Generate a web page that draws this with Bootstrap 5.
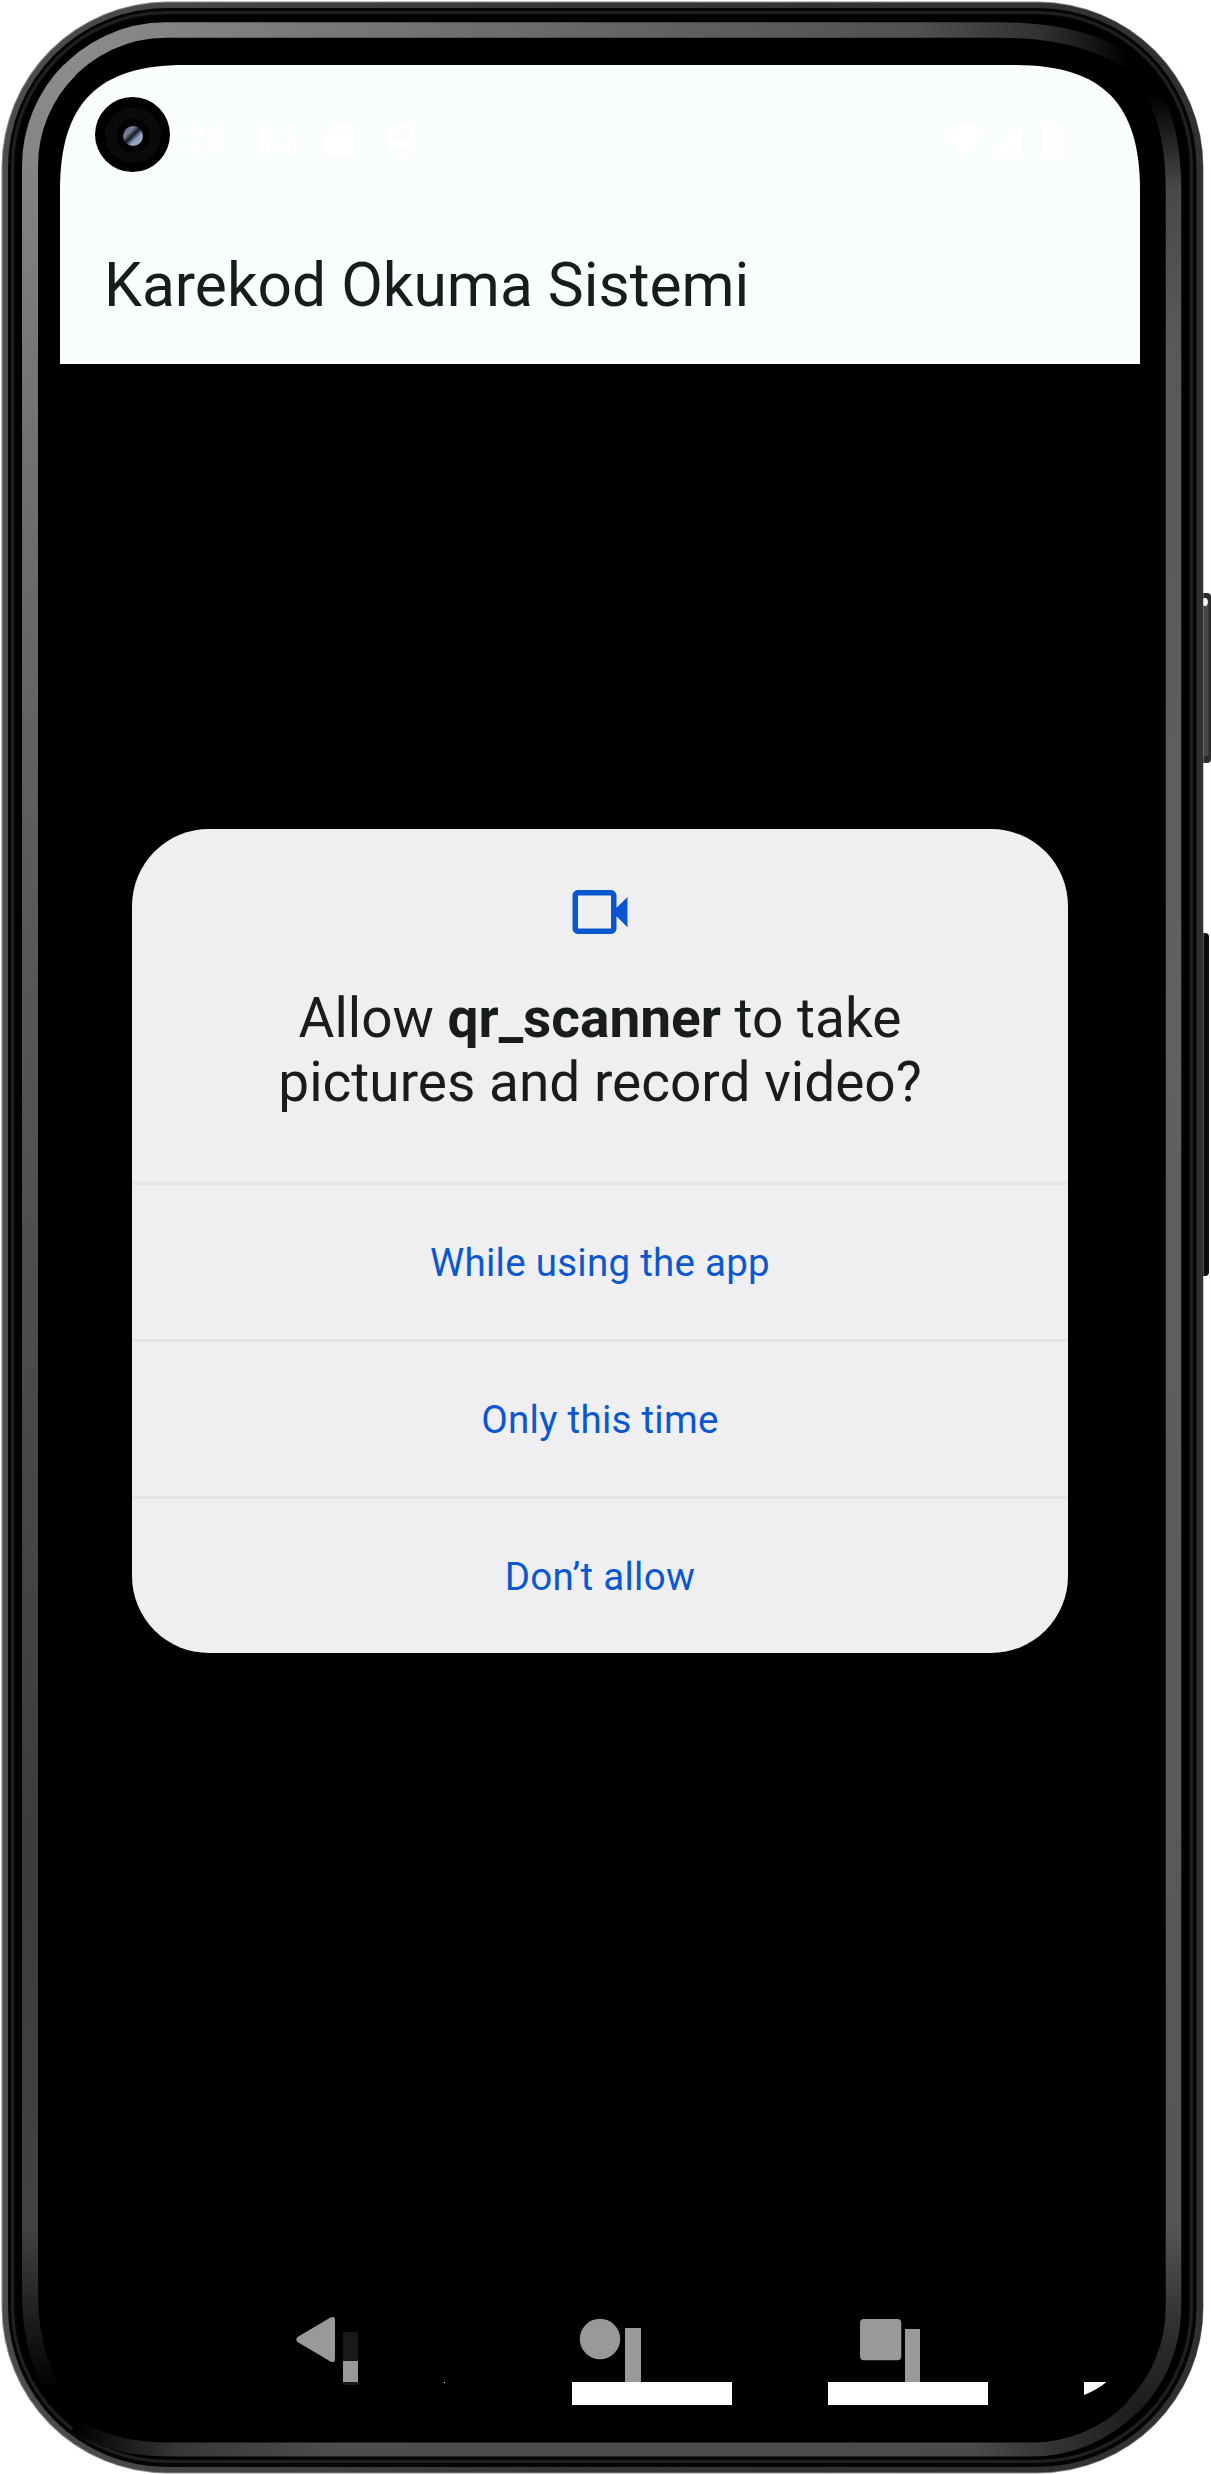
<!DOCTYPE html>
<html lang="tr">
<head>
<meta charset="utf-8">
<meta name="viewport" content="width=device-width, initial-scale=1">
<title>Karekod Okuma Sistemi</title>
<link href="https://cdn.jsdelivr.net/npm/bootstrap@5.3.0/dist/css/bootstrap.min.css" rel="stylesheet">
<style>
  body { font-family: Roboto, "Liberation Sans", sans-serif; background: #fff; color: #191c1d; }
  .device { width: 1211px; height: 2474px; padding: 65px 71px 69px 60px; }
  .device-shell { left: 0; top: 0; z-index: 0; }
  .device-screen { z-index: 1; width: 1080px; height: 2340px; }
  .app-top {
    height: 299px; background: #f9fdfe;
    clip-path: path("M0 125C0 38 38 0 125 0H955C1042 0 1080 38 1080 125V299H0Z");
  }
  .status-row { height: 145px; padding: 0 72px 0 45px; color: #fff; }
  .status-time { font-size: 38.5px; line-height: 45px; width: 154px; padding-left: 70px; padding-top: 53px; }
  .app-title { font-size: 60.5px; line-height: 71px; font-weight: 400; padding: 40px 44px 0; }
  .camera-lens { left: 95px; top: 97px; z-index: 2; }
  .permission { width: 936px; border-radius: 77px; background: #efeff2; margin-top: 465px; }
  .permission-head { height: 353px; padding-top: 50px; }
  .permission-title { font-size: 55px; line-height: 64px; font-weight: 400; margin-top: 41px; }
  .permission-btn {
    height: 157px; border: 0; border-top: 3px solid #e4e5e8; border-radius: 0;
    font-size: 38.5px; line-height: 45px; letter-spacing: .27px; color: #0b57d0; padding: 1px 0 0;
  }
  .nav-area { height: 100px; }
</style>
</head>
<body>
<main class="device position-relative overflow-hidden">
  <svg class="device-shell position-absolute" width="1211" height="2474" viewBox="0 0 1211 2474" fill="none" aria-hidden="true">
    <defs>
      <linearGradient id="edge" x1="0" y1="0" x2="1" y2="0"><stop offset="0" stop-color="#4b4d4b"/><stop offset=".5" stop-color="#343636"/><stop offset="1" stop-color="#2e3131"/></linearGradient>
      <linearGradient id="shineL" gradientUnits="userSpaceOnUse" x1="0" y1="60" x2="0" y2="2390"><stop offset="0" stop-color="#8c8c8c"/><stop offset=".12" stop-color="#777"/><stop offset=".35" stop-color="#5a5a5a"/><stop offset=".77" stop-color="#3b3b3b"/><stop offset=".93" stop-color="#424242"/><stop offset="1" stop-color="#000"/></linearGradient>
      <linearGradient id="shineT" gradientUnits="userSpaceOnUse" x1="60" y1="0" x2="1130" y2="0"><stop offset="0" stop-color="#8c8c8c"/><stop offset=".22" stop-color="#7a7a7a"/><stop offset=".8" stop-color="#505050"/><stop offset=".92" stop-color="#303030"/><stop offset="1" stop-color="#000"/></linearGradient>
      <linearGradient id="shineR" gradientUnits="userSpaceOnUse" x1="0" y1="95" x2="0" y2="2411"><stop offset="0" stop-color="#000"/><stop offset=".04" stop-color="#484848"/><stop offset=".1" stop-color="#585858"/><stop offset=".4" stop-color="#616161"/><stop offset=".92" stop-color="#555"/><stop offset=".97" stop-color="#2b2b2b"/><stop offset="1" stop-color="#1d1d1d"/></linearGradient>
      <linearGradient id="shineB" gradientUnits="userSpaceOnUse" x1="75" y1="0" x2="1132" y2="0"><stop offset="0" stop-color="#000"/><stop offset=".1" stop-color="#383838"/><stop offset=".25" stop-color="#4d4d4d"/><stop offset=".85" stop-color="#4a4a4a"/><stop offset="1" stop-color="#1d1d1d"/></linearGradient>
    </defs>
    <!-- side keys -->
    <rect x="1198" y="593" width="13" height="170" rx="4" fill="#2c2c2c"/>
    <rect x="1203" y="600" width="5.5" height="156" rx="2" fill="#474747"/>
    <ellipse cx="1205" cy="602" rx="2.8" ry="4" fill="#fff"/>
    <rect x="1198" y="933" width="11" height="343" rx="4" fill="#0a0a0a"/>
    <!-- body and rims -->
    <rect x="1.5" y="1.5" width="1202" height="2472" rx="166" fill="#8c8d8b"/>
    <rect x="2.5" y="2.5" width="1200.5" height="2470" rx="165" fill="url(#edge)"/>
    <rect x="8" y="8" width="1188.5" height="2459" rx="159" fill="#050505"/>
    <rect x="12.5" y="12.5" width="1179" height="2449" rx="154" stroke="#202020" stroke-width="3"/>
    <rect x="16" y="16" width="1172" height="2442" rx="150" fill="#000"/>
    <!-- glossy inner bevel -->
    <path d="M52 2388Q30 2350 30 2290V166A136 136 0 0 1 69.800 69.800" stroke="url(#shineL)" stroke-width="16"/>
    <path d="M62 78.400A136 136 0 0 1 166 30H1000Q1080 30 1130 62" stroke="url(#shineT)" stroke-width="15.500"/>
    <path d="M1154 95Q1173.500 130 1173.500 190V2307.500A142 142 0 0 1 1131.900 2407.900" stroke="url(#shineR)" stroke-width="15.500"/>
    <path d="M75 2425Q110 2449.500 170 2449.500H1031.500A142 142 0 0 0 1131.900 2407.900" stroke="url(#shineB)" stroke-width="14"/>
  </svg>

  <section class="device-screen position-relative d-flex flex-column align-items-center">
    <header class="app-top w-100">
      <div class="status-row d-flex">
        <div class="status-time">:26</div>
        <svg class="me-auto" width="160" height="145" viewBox="259 65 160 145" fill="none" aria-hidden="true">
          <path d="M262 153V130Q262 124 268 128L278 136L288 128Q295 124 295 130V153H288V141L278 149L268 141V153Z" stroke="#fff" stroke-width="3" stroke-linejoin="round"/>
          <path fill-rule="evenodd" d="M337 123.500H350Q353.500 123.500 353.500 127V154Q353.500 157.500 350 157.500H329Q325.500 157.500 325.500 154V135ZM337 128V134H340V128ZM343 128V134H346V128ZM348.500 128V134H351.500V128Z" fill="#fff"/>
          <path d="M390 139V131L395 126H407L412 125V136M390 141H411V145Q411 156 401 156Q390 156 390 145H408M396 133H398M404 133H406" stroke="#fff" stroke-width="3"/>
        </svg>
        <svg width="125" height="145" viewBox="943 65 125 145" fill="#fff" aria-hidden="true">
          <path d="M943 132Q963.500 115 984 132L963.500 157Z"/>
          <path d="M988 158L1022 124V158Z"/>
          <path d="M1044 125H1048V122H1057V125H1061Q1063 125 1063 127V156Q1063 158 1061 158H1044Q1042 158 1042 156V127Q1042 125 1044 125Z"/>
        </svg>
      </div>
      <h1 class="app-title mb-0">Karekod Okuma Sistemi</h1>
    </header>

    <div class="permission d-flex flex-column overflow-hidden text-center" role="dialog" aria-label="Permission">
      <div class="permission-head">
        <svg class="d-block mx-auto" width="66" height="66" viewBox="0 0 24 24" fill="#0b57d0" aria-hidden="true">
          <path fill-rule="evenodd" d="M18 10.480V6c0-1.100-.9-2-2-2H4c-1.100 0-2 .9-2 2v12c0 1.100.9 2 2 2h12c1.100 0 2-.9 2-2v-4.480l4 3.980v-11l-4 3.980zM16 18H4V6h12v12z"/>
        </svg>
        <h2 class="permission-title mb-0">Allow <strong>qr_scanner</strong> to take<br>pictures and record video?</h2>
      </div>
      <button class="permission-btn btn w-100" type="button">While using the app</button>
      <button class="permission-btn btn w-100" type="button">Only this time</button>
      <button class="permission-btn btn w-100" type="button">Don’t allow</button>
    </div>

    <nav class="nav-area w-100 mt-auto" aria-label="Navigation">
      <svg class="d-block" width="1080" height="100" viewBox="60 2305 1080 100" aria-hidden="true">
        <g fill="#999">
          <path d="M297.500 2337L330.500 2317.500Q335 2315.500 335 2320V2359Q335 2363.500 330.500 2361.500L297.500 2342Q295 2339.500 297.500 2337Z"/>
          <circle cx="600" cy="2339" r="20.200"/>
          <rect x="860" y="2319" width="41.300" height="41.300" rx="4"/>
          <rect x="625" y="2328" width="16" height="54"/>
          <rect x="905" y="2329" width="15" height="53"/>
        </g>
        <rect x="343" y="2332" width="15" height="53" fill="#191919"/>
        <rect x="343" y="2361" width="15" height="21" fill="#999"/>
        <g fill="#fff">
          <rect x="444" y="2382" width="1" height="1"/>
          <rect x="572" y="2382" width="160" height="23"/>
          <rect x="828" y="2382" width="160" height="23"/>
          <path d="M1084 2382H1106.500Q1097 2390 1084 2395Z"/>
        </g>
      </svg>
    </nav>
  </section>

  <svg class="camera-lens position-absolute" width="75" height="75" viewBox="0 0 75 75" aria-hidden="true">
    <defs><linearGradient id="glass" x1="0" y1="0" x2="1" y2="1"><stop offset="0" stop-color="#4a5068"/><stop offset=".3" stop-color="#7c849c"/><stop offset=".48" stop-color="#15182a"/><stop offset=".65" stop-color="#8d9bb8"/><stop offset="1" stop-color="#a9bddb"/></linearGradient></defs>
    <circle cx="37.500" cy="37.500" r="37.500"/>
    <circle cx="38" cy="38" r="28" fill="#0a0a0a"/>
    <circle cx="38" cy="38.500" r="17" fill="#020202"/>
    <circle cx="38" cy="39" r="10" fill="url(#glass)"/>
  </svg>
</main>
<script src="https://cdn.jsdelivr.net/npm/bootstrap@5.3.0/dist/js/bootstrap.bundle.min.js"></script>
</body>
</html>
